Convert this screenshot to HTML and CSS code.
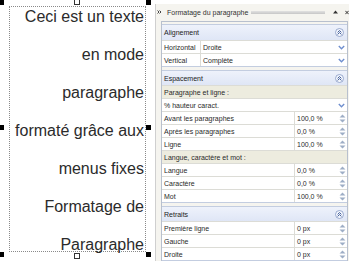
FILE: index.html
```html
<!DOCTYPE html>
<html lang="fr">
<head>
<meta charset="utf-8">
<title>Formatage du paragraphe</title>
<link rel="stylesheet" href="styles.css">
</head>
<body>
<div class="canvas">
  <div class="frame">
    <p class="ptext">Ceci est un texte<br>en mode<br>paragraphe<br>formaté grâce aux<br>menus fixes<br>Formatage de<br>Paragraphe</p>
  </div>
  <span class="h h-tl"></span><span class="h h-ml"></span><span class="h h-bl"></span>
  <span class="h h-tr"></span><span class="h h-mr"></span><span class="h h-br"></span>
  <span class="hh hh-t"></span><span class="hh hh-b"></span>
</div>

<div class="panel">
  <div class="titlebar">
    <svg class="grip" width="5" height="5" viewBox="0 0 5 5"><path d="M0.5 0.5 L2 2 L0.5 3.5 M2.5 0.5 L4 2 L2.5 3.5" fill="none" stroke="#333" stroke-width="0.9"/></svg>
    <span class="title">Formatage du paragraphe</span>
    <span class="tbar"></span>
    <svg class="tb-up" width="5" height="4" viewBox="0 0 5 4"><path d="M0 3.5 L2.5 0.5 L5 3.5Z" fill="#333"/></svg>
    <svg class="tb-x" width="4" height="5" viewBox="0 0 4 5"><path d="M0.3 0.8 L3.7 4.2 M3.7 0.8 L0.3 4.2" stroke="#333" stroke-width="1"/></svg>
  </div>

  <div class="pbody">
    <div class="sheet">
      <section class="sec sec-first">
        <div class="hdr"><span>Alignement</span>
          <svg class="coll" width="9" height="9" viewBox="0 0 9 9"><circle cx="4.5" cy="4.5" r="4" fill="#f4f7fd" stroke="#8ea2c9" stroke-width="0.9"/><path d="M2.6 4.4 L4.5 2.6 L6.4 4.4 M2.6 6.4 L4.5 4.6 L6.4 6.4" fill="none" stroke="#2c4b8c" stroke-width="0.9"/></svg>
        </div>
        <div class="row"><span class="lbl lbl-s">Horizontal</span><span class="val val-d">Droite<svg class="dd" width="7" height="5" viewBox="0 0 7 5"><path d="M0.8 1 L3.5 3.7 L6.2 1" fill="none" stroke="#6f8fcf" stroke-width="1.4"/></svg></span></div>
        <div class="row"><span class="lbl lbl-s">Vertical</span><span class="val val-d">Complète<svg class="dd" width="7" height="5" viewBox="0 0 7 5"><path d="M0.8 1 L3.5 3.7 L6.2 1" fill="none" stroke="#6f8fcf" stroke-width="1.4"/></svg></span></div>
      </section>

      <section class="sec">
        <div class="hdr"><span>Espacement</span>
          <svg class="coll" width="9" height="9" viewBox="0 0 9 9"><circle cx="4.5" cy="4.5" r="4" fill="#f4f7fd" stroke="#8ea2c9" stroke-width="0.9"/><path d="M2.6 4.4 L4.5 2.6 L6.4 4.4 M2.6 6.4 L4.5 4.6 L6.4 6.4" fill="none" stroke="#2c4b8c" stroke-width="0.9"/></svg>
        </div>
        <div class="row sub">Paragraphe et ligne :</div>
        <div class="row"><span class="val val-d val-full">% hauteur caract.<svg class="dd" width="7" height="5" viewBox="0 0 7 5"><path d="M0.8 1 L3.5 3.7 L6.2 1" fill="none" stroke="#6f8fcf" stroke-width="1.4"/></svg></span></div>
        <div class="row"><span class="lbl">Avant les paragraphes</span><span class="val val-n">100,0 %<svg class="spin" width="7" height="9" viewBox="0 0 7 9"><path d="M3.5 0.5 L6.5 3.5 H0.5Z M0.5 5.5 H6.5 L3.5 8.5Z" fill="#9eaec6"/></svg></span></div>
        <div class="row"><span class="lbl">Après les paragraphes</span><span class="val val-n">0,0 %<svg class="spin" width="7" height="9" viewBox="0 0 7 9"><path d="M3.5 0.5 L6.5 3.5 H0.5Z M0.5 5.5 H6.5 L3.5 8.5Z" fill="#9eaec6"/></svg></span></div>
        <div class="row"><span class="lbl">Ligne</span><span class="val val-n">100,0 %<svg class="spin" width="7" height="9" viewBox="0 0 7 9"><path d="M3.5 0.5 L6.5 3.5 H0.5Z M0.5 5.5 H6.5 L3.5 8.5Z" fill="#9eaec6"/></svg></span></div>
        <div class="row sub">Langue, caractère et mot :</div>
        <div class="row"><span class="lbl">Langue</span><span class="val val-n">0,0 %<svg class="spin" width="7" height="9" viewBox="0 0 7 9"><path d="M3.5 0.5 L6.5 3.5 H0.5Z M0.5 5.5 H6.5 L3.5 8.5Z" fill="#9eaec6"/></svg></span></div>
        <div class="row"><span class="lbl">Caractère</span><span class="val val-n">0,0 %<svg class="spin" width="7" height="9" viewBox="0 0 7 9"><path d="M3.5 0.5 L6.5 3.5 H0.5Z M0.5 5.5 H6.5 L3.5 8.5Z" fill="#9eaec6"/></svg></span></div>
        <div class="row"><span class="lbl">Mot</span><span class="val val-n">100,0 %<svg class="spin" width="7" height="9" viewBox="0 0 7 9"><path d="M3.5 0.5 L6.5 3.5 H0.5Z M0.5 5.5 H6.5 L3.5 8.5Z" fill="#9eaec6"/></svg></span></div>
      </section>

      <section class="sec">
        <div class="hdr"><span>Retraits</span>
          <svg class="coll" width="9" height="9" viewBox="0 0 9 9"><circle cx="4.5" cy="4.5" r="4" fill="#f4f7fd" stroke="#8ea2c9" stroke-width="0.9"/><path d="M2.6 4.4 L4.5 2.6 L6.4 4.4 M2.6 6.4 L4.5 4.6 L6.4 6.4" fill="none" stroke="#2c4b8c" stroke-width="0.9"/></svg>
        </div>
        <div class="row"><span class="lbl">Première ligne</span><span class="val val-n">0 px<svg class="spin" width="7" height="9" viewBox="0 0 7 9"><path d="M3.5 0.5 L6.5 3.5 H0.5Z M0.5 5.5 H6.5 L3.5 8.5Z" fill="#9eaec6"/></svg></span></div>
        <div class="row"><span class="lbl">Gauche</span><span class="val val-n">0 px<svg class="spin" width="7" height="9" viewBox="0 0 7 9"><path d="M3.5 0.5 L6.5 3.5 H0.5Z M0.5 5.5 H6.5 L3.5 8.5Z" fill="#9eaec6"/></svg></span></div>
        <div class="row"><span class="lbl">Droite</span><span class="val val-n">0 px<svg class="spin" width="7" height="9" viewBox="0 0 7 9"><path d="M3.5 0.5 L6.5 3.5 H0.5Z M0.5 5.5 H6.5 L3.5 8.5Z" fill="#9eaec6"/></svg></span></div>
      </section>
    </div>
  </div>
</div>
</body>
</html>
```

FILE: styles.css
```css
* { box-sizing: border-box; margin: 0; padding: 0; }
html, body { width: 349px; height: 261px; overflow: hidden; background: #fff; }
body { display: flex; font-family: "Liberation Sans", Arial, sans-serif; }

/* ---------- canvas with the text frame ---------- */
.canvas { position: relative; flex: none; width: 155px; height: 261px; }
.frame {
  margin: 6px 0 0 9px;
  width: 137px;
  height: 246px;
  border: 1px dotted #8a8a8a;
}
.ptext {
  margin-top: -9px;
  padding-right: 1px;
  text-align: right;
  font-size: 16px;
  line-height: 38px;
  color: #2b2b2b;
  white-space: nowrap;
}
.h { position: absolute; width: 5px; height: 5px; background: #000; }
.h-tl { left: -1px; top: 0; }
.h-ml { left: -1px; top: 125px; }
.h-bl { left: -1px; top: 252px; }
.h-tr { left: 146px; top: 0; }
.h-mr { left: 146px; top: 125px; }
.h-br { left: 146px; top: 252px; }
.hh { position: absolute; width: 6px; height: 6px; background: #fff; border: 1px solid #333; left: 74px; }
.hh-t { top: -1px; }
.hh-b { top: 253px; }

/* ---------- side panel ---------- */
.panel {
  flex: 1;
  margin-top: 4px;
  border-left: 1px solid #cfcfcf;
  background: #f5f4ef;
  font-size: 7px;
  color: #2a2a2a;
  display: flex;
  flex-direction: column;
}
.titlebar { height: 16px; display: flex; align-items: center; flex: none; }
.grip { margin-left: 1px; flex: none; }
.title { margin-left: 5px; white-space: nowrap; color: #333; }
.tbar {
  flex: 1;
  height: 3px;
  margin: 0 8px 0 3px;
  background: linear-gradient(to bottom, #e2e2e2, #c6c6c6);
}
.tb-up { flex: none; }
.tb-x { flex: none; margin-left: 7px; }

.pbody { flex: 1; padding: 1px 1px 0 5px; }
.sheet {
  height: 100%;
  border: 1px solid #b8c0ce;
  border-bottom: none;
  padding-top: 2px;
}
.sec {
  background: #fff;
  border-top: 1px solid #c3cde0;
  border-bottom: 1px solid #c3cde0;
  margin-bottom: 3px;
}
.hdr {
  height: 14px;
  display: flex;
  align-items: center;
  justify-content: space-between;
  padding: 0 3px 0 2px;
  background: linear-gradient(to bottom, #eef2fb, #dfe6f6);
  color: #222;
}
.sec-first .hdr { height: 15px; }
.coll { flex: none; }

.row {
  height: 13px;
  border-top: 1px solid #dcdcd6;
  display: flex;
  align-items: stretch;
  white-space: nowrap;
}
.row.sub { background: #edecdf; padding-left: 2px; align-items: center; }
.lbl {
  flex: 1;
  display: flex;
  align-items: center;
  padding-left: 2px;
  border-right: 1px solid #dcdcd6;
}
.lbl-s { flex: none; width: 39px; }
.val { display: flex; align-items: center; justify-content: space-between; padding-left: 2px; }
.val-d { flex: 1; padding-right: 2px; }
.val-full { padding-left: 2px; }
.val-n { flex: none; width: 52px; padding-right: 1px; }
.dd, .spin { flex: none; }
```
